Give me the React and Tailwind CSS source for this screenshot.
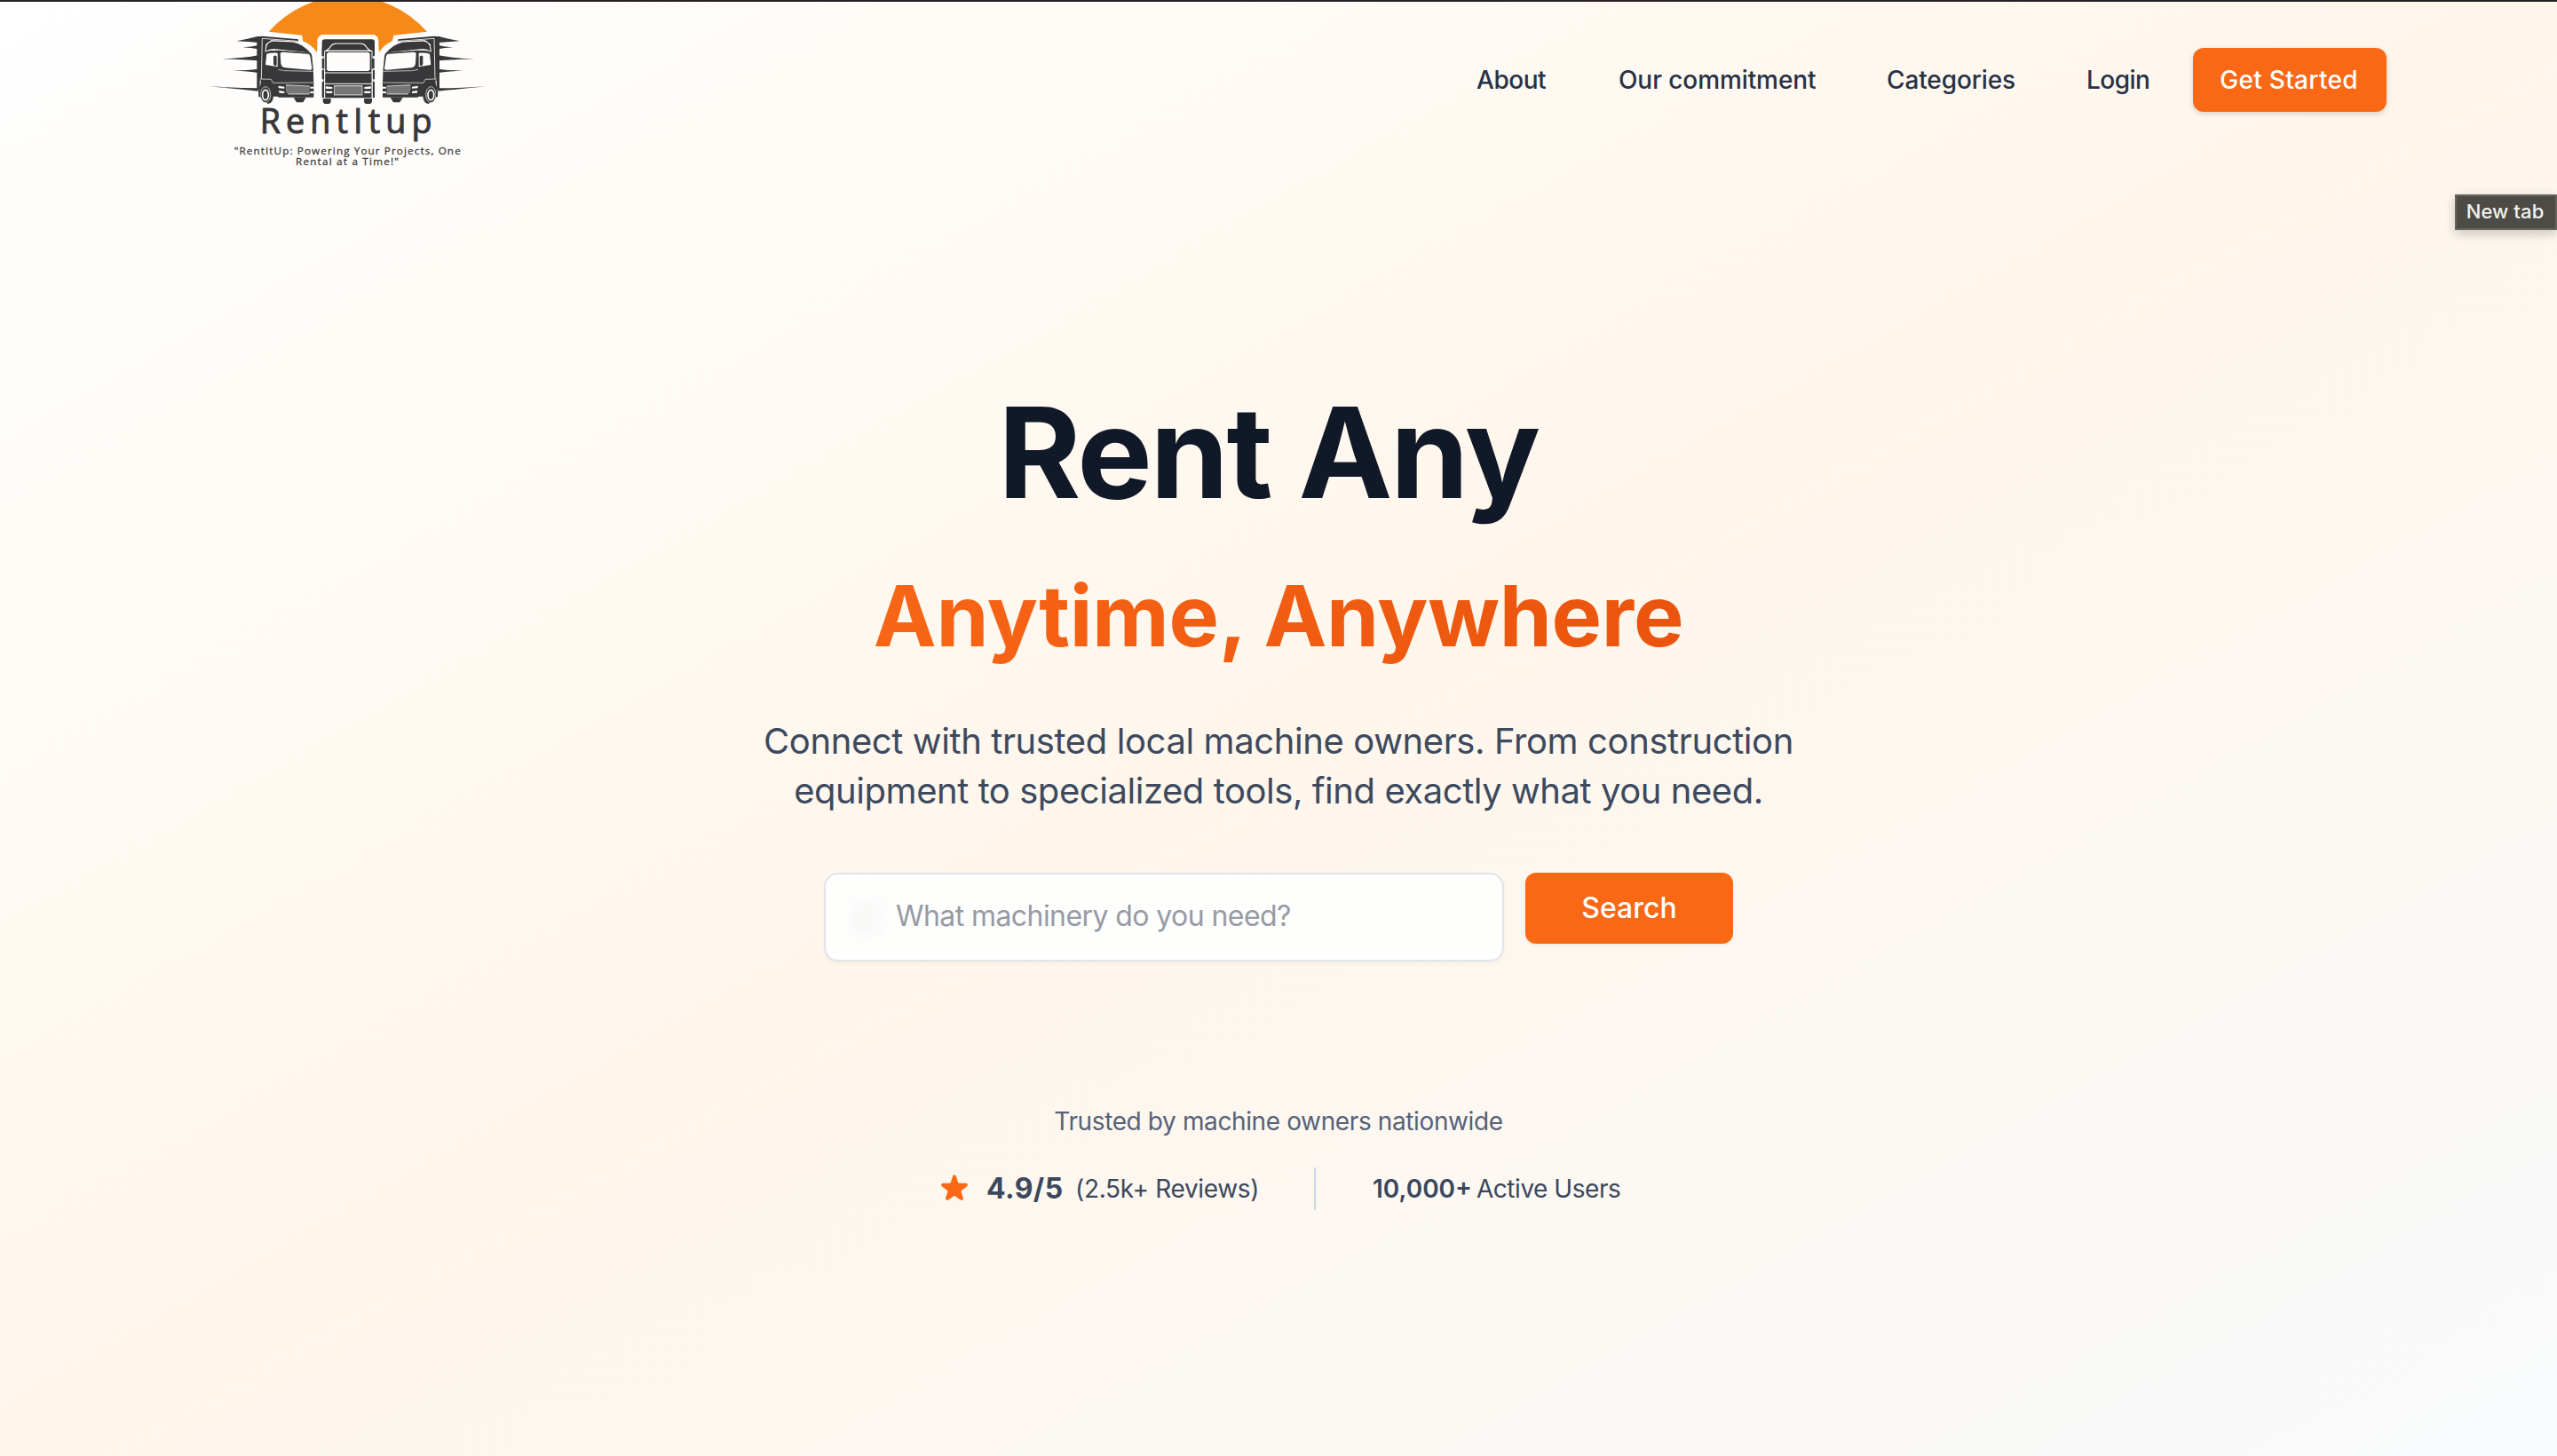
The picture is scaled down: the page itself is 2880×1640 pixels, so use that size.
const INK = "#38383a";
const PAPER = "#fffefc";

function SideTruck() {
  return (
    <g>
      {/* speed lines */}
      <g fill={INK}>
        <path d="M109 139Q145 132 180 123H190V145Q150 141 109 139Z" />
        <path d="M130 160Q160 159 182 153V166Q160 161 130 160Z" />
        <path d="M60 199Q130 197 182 187V205Q130 201 60 199Z" />
        <path d="M84 238Q140 239 182 233V246Q140 240 84 238Z" />
        <path d="M20 292Q110 298 182 298V308Q110 300 20 292Z" />
      </g>
      {/* trailer */}
      <path fill={INK} d="M178 124L197 122L318 133L318 140L226 136L208 150L206 268L188 272L188 304L178 302Z" />
      <path fill="none" stroke={PAPER} strokeWidth="2.5" d="M316 139L196 130L193 268" />
      {/* roof fairing */}
      <path
        fill={INK}
        stroke={PAPER}
        strokeWidth="3"
        d="M207 172L210 155Q216 140 234 138L300 141Q332 146 362 180L250 168Q222 164 207 175Z"
      />
      {/* cab */}
      <path
        fill={INK}
        d="M204 178Q210 172 224 171L252 170L356 178Q362 179 364 190Q370 236 370 282V329H250V326L226 326Q226 290 204 286L190 288L192 268L200 266Z"
      />
      <path fill={PAPER} d="M211 182Q222 178 248 179V226L207 219Z" />
      <path fill={INK} d="M234 190Q243 184 245 192L245 220Q238 228 234 216Z" />
      <path fill={PAPER} d="M264 176L350 182Q357 183 358 190L364 230Q365 237 356 236L274 229Q260 227 259 214L257 182Q257 176 264 176Z" />
      <path fill="none" stroke={PAPER} strokeWidth="2" d="M250 235L272 239L368 241M188 267L226 268L232 280L368 279" />
      {/* grille */}
      <path fill="#8a8a8a" d="M276 287L356 291V318H286Q278 316 276 304Z" />
      <path stroke={INK} strokeWidth="1.5" d="M277 294H356M278 300H356M280 306H356M282 312H356" />
      <path fill={PAPER} d="M250 290L271 293V299L252 298ZM252 306L271 309V315L254 314ZM358 293H370V299H358ZM358 309H370V315H358Z" />
      <path fill="none" stroke={PAPER} strokeWidth="2" d="M276 287L356 291M284 318H356" />
      {/* bumper foot */}
      <path fill={INK} d="M302 329H344L334 346H312Z" />
      {/* wheels */}
      <path fill={INK} d="M186 296Q190 282 206 282Q232 286 234 318Q234 350 216 351L204 344L190 330Z" />
      <ellipse cx="207" cy="320" rx="17" ry="27" fill={INK} stroke={PAPER} strokeWidth="2" />
      <ellipse cx="207" cy="321" rx="10" ry="17" fill={INK} stroke={PAPER} strokeWidth="5" />
      <path fill={INK} d="M183 304H190V328H184Z" />
    </g>
  );
}

function FrontTruck() {
  return (
    <g>
      <rect x="382" y="117" width="207" height="240" rx="20" fill={PAPER} />
      <rect x="398" y="133" width="178" height="66" rx="9" fill={INK} />
      <path fill={INK} d="M398 160H405V330H398ZM569 160H576V330H569ZM407 165H567V331H407Z" />
      <path
        fill={INK}
        stroke={PAPER}
        strokeWidth="3.5"
        d="M412 172Q424 164 428 156Q434 147 446 147H528Q540 147 546 156Q550 164 562 172Z"
      />
      <path fill="none" stroke={PAPER} strokeWidth="3" d="M407 332V172H567V332M408 246H566M408 283H566" />
      <rect x="414" y="177" width="146" height="63" rx="8" fill={PAPER} />
      {/* mirrors */}
      <path fill={PAPER} d="M396 190H404V236H396ZM570 190H578V236H570ZM396 268H403V276H396ZM571 268H578V276H571Z" />
      <path fill={INK} d="M398 197H406V232H398ZM566 197H575V232H566Z" />
      {/* grille and lamps */}
      <rect x="439" y="290" width="95" height="31" fill="#8a8a8a" stroke={PAPER} strokeWidth="2" />
      <path stroke={INK} strokeWidth="1.5" d="M440 297H533M440 303H533M440 309H533M440 315H533" />
      <path fill={PAPER} d="M410 292L433 294V300H411ZM411 308H433V315H413ZM564 292L541 294V300H563ZM563 308H541V315H561Z" />
      <path fill={INK} d="M401 333H428V342Q428 350 420 351H408Q401 350 401 342ZM540 333H567V342Q567 350 560 351H548Q540 350 540 342Z" />
    </g>
  );
}

function Logo() {
  return (
    <svg viewBox="0 6 990 594" className="ml-[230px] h-[198px] w-[330px] shrink-0" role="img" aria-label="RentItup">
      <path
        fill="#f68a19"
        d="M218 107A357 357 0 0 1 753 107L640 119L636 138Q606 152 591 177L586 135H386L381 177Q364 152 333 138L331 119Z"
      />
      <SideTruck />
      <g transform="matrix(-1 0 0 1 973 0)">
        <SideTruck />
      </g>
      <FrontTruck />
      <g fill={INK} stroke={INK} className="font-['Open_Sans',sans-serif] font-medium">
        <text x="188" y="449" fontSize="113" letterSpacing="18.4" strokeWidth="3">RentItup</text>
        <text x="101" y="522" fontSize="35" letterSpacing="3.37" strokeWidth="0.8">&quot;RentItUp: Powering Your Projects, One</text>
        <text x="309" y="558" fontSize="35" letterSpacing="3.67" strokeWidth="0.8">Rental at a Time!&quot;</text>
      </g>
    </svg>
  );
}

function Header() {
  return (
    <header className="flex h-[176px] items-start justify-between pr-[192px]">
      <Logo />
      <nav className="flex h-[176px] items-center text-[28px] leading-10 font-medium whitespace-nowrap text-[#273247]">
        <a className="mr-20 w-[80px] tracking-[-0.45px]">About</a>
        <a className="mr-20 w-[222px] tracking-[-0.09px]">Our commitment</a>
        <a className="mr-20 w-[145px] tracking-[-0.12px]">Categories</a>
        <a className="mr-12 w-[72px] tracking-[-0.54px]">Login</a>
        <button className="h-[72px] w-[218px] rounded-xl bg-[#f96815] pr-0.5 tracking-[0.3px] text-white shadow-[0_2px_6px_rgba(0,0,0,0.16)]">
          Get Started
        </button>
      </nav>
    </header>
  );
}

function SearchBar() {
  return (
    <form className="mt-[64px] flex w-[1024px] items-start justify-between">
      <div className="flex h-[100px] w-[766px] items-center rounded-[16px] border-2 border-[#e0e5eb] bg-[#fefefd] pl-[28px] shadow-[0_2px_4px_rgba(0,0,0,0.05)]">
        <div className="mr-[15px] h-10 w-9 bg-[#f9f9f8] blur-[6px]" />
        <div className="pb-0.5 text-[32px] leading-10 tracking-[-0.577px] text-[#979aa5]">What machinery do you need?</div>
      </div>
      <button
        type="button"
        className="h-20 w-[234px] rounded-xl bg-[#f96815] text-[32px] leading-10 font-medium text-white shadow-[0_2px_4px_rgba(0,0,0,0.05)]"
      >
        Search
      </button>
    </form>
  );
}

function Stats() {
  return (
    <div className="mt-8 flex h-12 items-center text-[28px] whitespace-nowrap text-[#3b475c]">
      <svg viewBox="0 0 20 20" className="mr-[16px] size-10 fill-[#f96815]">
        <path d="M9.049 2.927c.3-.921 1.603-.921 1.902 0l1.07 3.292a1 1 0 00.95.69h3.462c.969 0 1.371 1.24.588 1.81l-2.8 2.034a1 1 0 00-.364 1.118l1.07 3.292c.3.921-.755 1.688-1.54 1.118l-2.8-2.034a1 1 0 00-1.175 0l-2.8 2.034c-.784.57-1.838-.197-1.539-1.118l1.07-3.292a1 1 0 00-.364-1.118L2.98 8.72c-.783-.57-.38-1.81.588-1.81h3.461a1 1 0 00.951-.69l1.07-3.292z" />
      </svg>
      <span className="w-[100px] text-[32px] font-bold tracking-[0.4px]">4.9/5</span>
      <span className="w-[205px] tracking-[-0.33px]">(2.5k+ Reviews)</span>
      <div className="mx-16 h-12 w-0.5 bg-slate-300" />
      <span className="w-[117px] font-semibold">10,000+</span>
      <span className="w-[162px] tracking-[-0.47px]">Active Users</span>
    </div>
  );
}

export default function App() {
  return (
    <div className="relative h-[1640px] w-[2880px] overflow-hidden border-t-2 border-[#242224] bg-linear-to-br/srgb from-white via-[#fff6eb] to-slate-50 font-['Inter',sans-serif]">
      <Header />
      <main className="flex flex-col items-center pt-[259px]">
        <h1 className="flex flex-col items-center font-bold whitespace-nowrap">
          <span className="pr-[23px] text-[142px] leading-[144px] tracking-[-2.377px] text-[#111827]">Rent Any</span>
          <span className="mt-[49px] bg-linear-to-r/srgb from-[#f76516] to-[#ea540e] bg-clip-text pt-4 pb-6 text-[95px] leading-[96px] tracking-[-0.3px] text-transparent">
            Anytime, Anywhere
          </span>
        </h1>
        <p className="mt-[41px] flex flex-col items-center text-[40px] leading-[56px] whitespace-nowrap text-[#3d495d]">
          <span className="tracking-[-0.4px]">Connect with trusted local machine owners. From construction</span>
          <span className="tracking-[-0.45px]">equipment to specialized tools, find exactly what you need.</span>
        </p>
        <SearchBar />
        <div className="mt-[160px] text-[28px] leading-10 tracking-[-0.38px] text-[#566278]">
          Trusted by machine owners nationwide
        </div>
        <Stats />
      </main>
      <div className="absolute top-[217px] right-0 flex h-10 w-[115px] items-center justify-center border-2 border-[#66645c] bg-[#4c4b45] pr-0.5 pb-0.5 text-[22px] font-medium tracking-[0.1px] text-[#f3f2ee] shadow-[0_4px_12px_rgba(0,0,0,0.22)]">
        New tab
      </div>
    </div>
  );
}
